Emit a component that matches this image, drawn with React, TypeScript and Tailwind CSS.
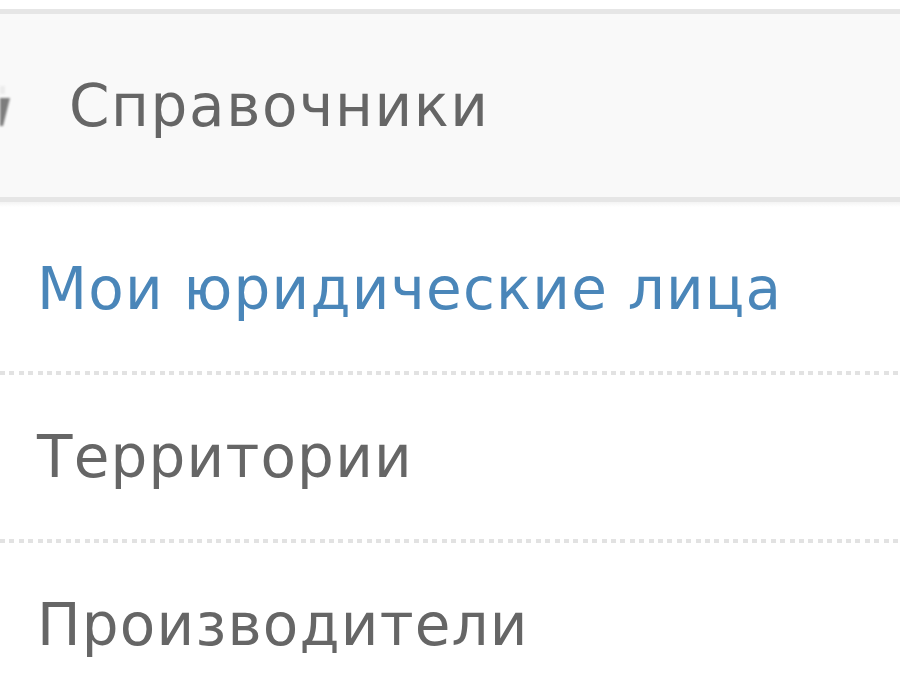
import React from 'react';

const items = [
  { label: 'Мои юридические лица', active: true },
  { label: 'Территории', active: false },
  { label: 'Производители', active: false },
];

function Dots() {
  return (
    <div className="h-[4px] w-full bg-[repeating-linear-gradient(to_right,#e2e2e2_0px,#e2e2e2_5px,transparent_5px,transparent_9.4px)]" />
  );
}

export default function App() {
  return (
    <div className="h-[700px] w-[900px] overflow-hidden bg-white pt-[9px] font-['DejaVu_Sans',sans-serif] tracking-[1.2px]">
      <div className="flex h-[193px] items-center border-y-[5px] border-[#e6e6e6] bg-[#f9f9f9]">
        <svg width="10" height="40" viewBox="0 0 10 40" className="shrink-0 blur-[1px]">
          <rect x="0" y="0" width="5" height="8" fill="#ececec" />
          <polygon points="0,12 10,12 3,40 0,40" fill="#7d7d7d" />
        </svg>
        <span className="ml-[59px] text-[58px] leading-none tracking-[1.6px] text-[#666666]">Справочники</span>
      </div>
      <div className="h-[5px] bg-gradient-to-b from-[#f4f4f4] to-white" />
      {items.map((item, i) => (
        <div key={item.label}>
          <div
            className={
              'flex h-[164px] items-center pl-[37px] text-[58px] leading-none ' +
              (item.active ? 'text-[#4a86b9]' : 'text-[#666666]')
            }
          >
            {item.label}
          </div>
          {i < items.length - 1 && <Dots />}
        </div>
      ))}
    </div>
  );
}
